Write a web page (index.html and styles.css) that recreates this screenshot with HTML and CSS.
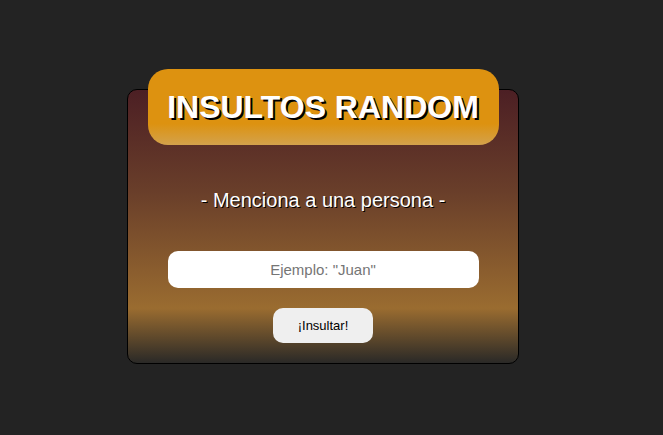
FILE: index.html
```html
<!DOCTYPE html>
<html lang="es">
<head>
<meta charset="utf-8">
<title>Insultos Random</title>
<link rel="stylesheet" href="styles.css">
</head>
<body>
<main class="page">
  <section class="card">
    <h1 class="title">INSULTOS RANDOM</h1>
    <p class="subtitle">- Menciona a una persona -</p>
    <input class="name-input" type="text" placeholder="Ejemplo: &quot;Juan&quot;">
    <button class="insult-btn" type="button">¡Insultar!</button>
  </section>
</main>
</body>
</html>
```

FILE: styles.css
```css
html, body {
  margin: 0;
  padding: 0;
  background: #232323;
  font-family: "Liberation Sans", Arial, sans-serif;
}
.page {
  width: 663px;
  height: 435px;
  box-sizing: border-box;
  padding: 89px 0 0 127px;
  display: flex;
  justify-content: flex-start;
  align-items: flex-start;
}
.card {
  width: 392px;
  box-sizing: border-box;
  border: 1px solid #000;
  border-radius: 10px;
  background: linear-gradient(180deg, #4c1f24 0%, #6a3f2a 38%, #9a6c30 80%, #2a2927 100%);
  display: flex;
  flex-direction: column;
  align-items: center;
  padding-bottom: 20px;
}
.title {
  margin: -21px 0 0 0;
  width: 351px;
  height: 76px;
  box-sizing: border-box;
  border-radius: 20px;
  background: linear-gradient(180deg, #dd9210 0%, #dd9210 72%, #d3a24c 100%);
  color: #fff;
  font-size: 32px;
  font-weight: bold;
  text-align: center;
  line-height: 76px;
  text-shadow: 2px 2px 0 #000;
}
.subtitle {
  margin: 44px 0 0 0;
  color: #fff;
  font-size: 20px;
  line-height: 23px;
  text-shadow: 1px 1px 0 #000;
}
.name-input {
  margin-top: 39px;
  width: 311px;
  height: 37px;
  box-sizing: border-box;
  border: none;
  border-radius: 10px;
  background: #fff;
  font-family: "Liberation Sans", Arial, sans-serif;
  font-size: 15px;
  text-align: center;
  outline: none;
}
.name-input::placeholder {
  color: #757575;
}
.insult-btn {
  margin-top: 20px;
  width: 100px;
  height: 35px;
  border: none;
  border-radius: 10px;
  background: #efefef;
  color: #000;
  font-family: "Liberation Sans", Arial, sans-serif;
  font-size: 13px;
}
```
